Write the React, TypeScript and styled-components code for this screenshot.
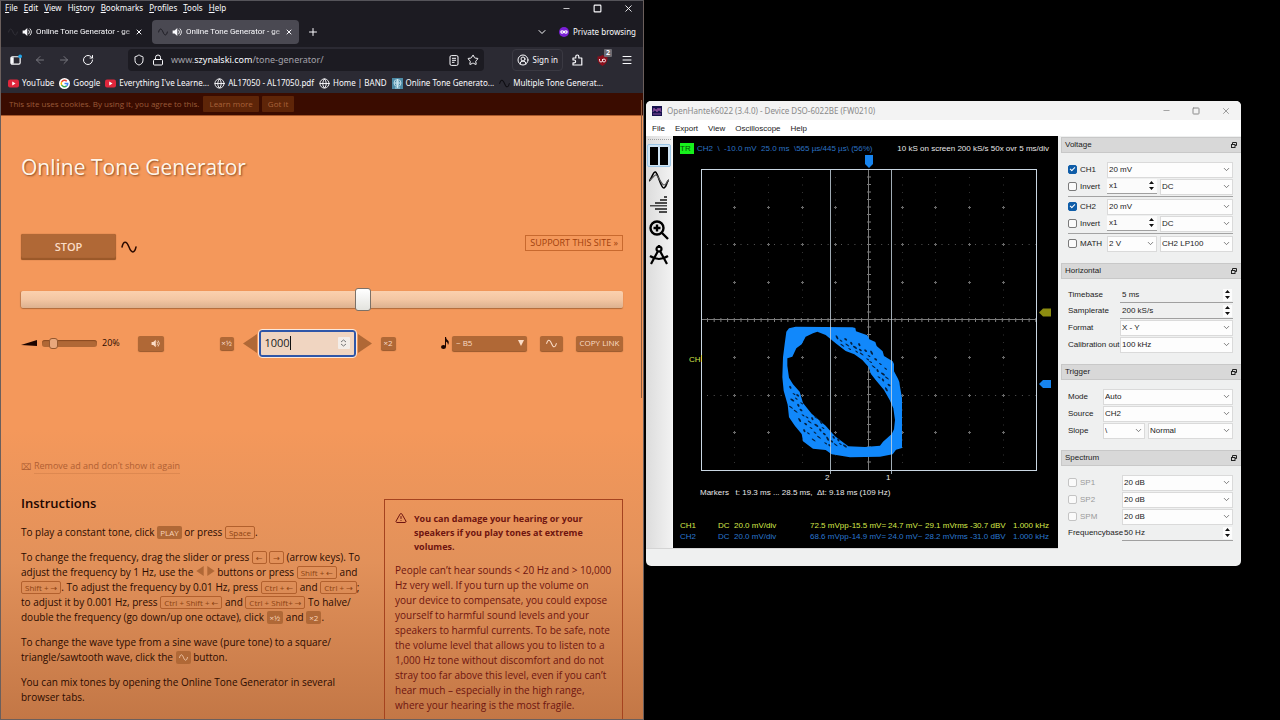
import React from "react";
import styled, { createGlobalStyle, css } from "styled-components";
import {
  ArrowLeft,
  ArrowRight,
  ChevronDown,
  CircleUserRound,
  Globe,
  Lock,
  Menu as MenuIcon,
  Minus,
  Plus,
  RotateCw,
  Shield,
  Square,
  Star,
  TriangleAlert,
  X,
} from "lucide-react";

const Global = createGlobalStyle`
  *, *::before, *::after { box-sizing: border-box; }
  body { margin: 0; background: #000; }
  button, input, select { font: inherit; color: inherit; margin: 0; padding: 0; border: 0; background: none; border-radius: 0; }
  h1, h2, p { margin: 0; font-weight: 400; }
`;

const uiFont = `"Noto Sans", "Open Sans", sans-serif`;
const pageFont = `"Open Sans", "Noto Sans", sans-serif`;
const scopeFont = `"Liberation Sans", Arial, sans-serif`;

/* ---------- desktop ---------- */

const Desktop = styled.main`
  display: grid;
  grid-template-columns: minmax(0, 644fr) minmax(0, 636fr);
  align-items: start;
  height: 100vh;
  overflow: hidden;
  background: #000;
`;

/* ---------- browser window ---------- */

const Browser = styled.section`
  position: relative;
  display: flex;
  flex-direction: column;
  height: 100vh;
  overflow: hidden;
  border: 1px solid #6b5f5c;
  border-top-color: #55545a;
  font: 8px/12px ${uiFont};
  color: #fbfbfe;
  background: #1c1b22;
`;

const MenuRow = styled.header`
  display: flex;
  align-items: center;
  justify-content: space-between;
  height: 14px;
  flex: none;
  padding: 0 9px 0 4px;
`;

const MenuItems = styled.nav<{ $gap: number }>`
  display: flex;
  gap: ${(p) => p.$gap}px;
`;

const MenuItem = styled.button`
  white-space: nowrap;
  u { text-underline-offset: 1px; }
`;

const WindowButtons = styled.div<{ $gap: number }>`
  display: flex;
  align-items: center;
  gap: ${(p) => p.$gap}px;
`;

const IconButton = styled.button<{ $w?: number; $dim?: boolean }>`
  position: relative;
  display: flex;
  align-items: center;
  justify-content: center;
  flex: none;
  width: ${(p) => p.$w ?? 12}px;
  height: 14px;
  ${(p) => p.$dim && css`color: #77767e;`}
`;

const TabRow = styled.div`
  display: flex;
  align-items: center;
  height: 32px;
  flex: none;
  padding: 2px 7px 0 1px;
  gap: 3px;
`;

const Tab = styled.div<{ $active?: boolean }>`
  display: flex;
  align-items: center;
  width: 147px;
  height: 24px;
  padding: 0 6px;
  border-radius: 4px;
  ${(p) => p.$active && css`background: #4a4952;`}
`;

const TabIcons = styled.span`
  display: flex;
  gap: 4px;
  margin-right: 4px;
`;

const TabTitle = styled.span`
  flex: 1;
  min-width: 0;
  overflow: hidden;
  white-space: nowrap;
  font-family: Roboto, ${uiFont};
  mask-image: linear-gradient(90deg, #000 88%, rgba(0, 0, 0, 0.25));
`;

const Spacer = styled.div`
  flex: 1;
`;

const PrivateBadge = styled.div`
  display: flex;
  align-items: center;
  gap: 4px;
  margin-left: 8px;
  white-space: nowrap;
`;

const NavRow = styled.div`
  display: flex;
  align-items: center;
  flex: none;
  height: 26px;
  padding: 0 10px 0 9px;
  gap: 8px;
  background: #2b2a33;
`;

const NavGroup = styled.div<{ $gap: number }>`
  display: flex;
  align-items: center;
  flex: none;
  gap: ${(p) => p.$gap}px;
`;

const UrlField = styled.div`
  display: flex;
  align-items: center;
  flex: 1;
  min-width: 0;
  height: 22px;
  margin: 0 20px 0 26px;
  padding: 0 5px;
  gap: 7px;
  border-radius: 4px;
  background: #1c1b22;
`;

const UrlText = styled.a`
  flex: 1;
  font-size: 9px;
  white-space: nowrap;
  text-decoration: none;
  color: #a3a2aa;
  b { font-weight: 400; color: #fbfbfe; }
`;

const SignIn = styled.button`
  display: flex;
  align-items: center;
  gap: 4px;
  height: 22px;
  padding: 0 4px;
  border: 1px solid #3a3942;
  border-radius: 4px;
  white-space: nowrap;
`;

const Badge = styled.span`
  position: absolute;
  top: -4px;
  right: -4px;
  padding: 0 2px;
  font: 700 7px/8px ${uiFont};
  border-radius: 1px;
  background: #6d6c73;
`;

const BookmarkRow = styled.nav`
  display: flex;
  align-items: center;
  flex: none;
  height: 20px;
  padding: 0 7px;
  gap: 5px;
  background: #2b2a33;
`;

const Bookmark = styled.a`
  display: flex;
  align-items: center;
  gap: 3px;
  white-space: nowrap;
  color: inherit;
  text-decoration: none;
`;

/* ---------- tone generator page ---------- */

const CookieBar = styled.div`
  display: flex;
  align-items: center;
  flex: none;
  gap: 3px;
  height: 23px;
  padding: 0 8px;
  border-bottom: 1px solid #a8592c;
  font: 8px/12px ${pageFont};
  color: #9a5a38;
  background: #3a0c00;
`;

const CookieButton = styled.button`
  height: 16px;
  padding: 0 6px;
  border-radius: 1px;
  color: #a9623a;
  background: #5e2508;
`;

const CookieText = styled.span`
  margin-right: 1px;
`;

const Page = styled.div`
  flex: 1;
  min-height: 0;
  overflow: hidden;
  padding: 35px 20px 0;
  font-family: ${pageFont};
  color: #2b0b00;
  background: linear-gradient(180deg, #f4985b 0%, #f4985b 52%, #e2915a 74%, #c37746 100%);
`;

const ScrollThumb = styled.div`
  position: absolute;
  top: 99px;
  right: 1px;
  width: 1px;
  height: 298px;
  background: #8d5a3c;
`;

const Title = styled.h1`
  font-size: 21px;
  line-height: 32px;
  color: #fff6ea;
  text-shadow: 1px 1px 2px #8a4a20;
`;

const PlayRow = styled.div`
  display: flex;
  justify-content: space-between;
  align-items: flex-start;
  margin-top: 51px;
`;

const PlayGroup = styled.div`
  display: flex;
  align-items: center;
  gap: 5px;
`;

const StopButton = styled.button`
  width: 95px;
  height: 26px;
  border-radius: 2px;
  font-size: 11px;
  font-weight: 600;
  color: #fbdcc6;
  background: #b06836;
  box-shadow: inset 0 -2px 1px #9a5829, 0 0 1px #8a4a20;
`;

const SupportLink = styled.a`
  margin-top: 1px;
  padding: 0 4px;
  border: 1px solid #c8692e;
  font-size: 9px;
  line-height: 14px;
  text-decoration: none;
  color: #a03f0c;
`;

const FrequencySlider = styled.input`
  display: block;
  width: 100%;
  height: 23px;
  margin: 28px 0 0;
  appearance: none;
  &::-webkit-slider-runnable-track {
    height: 17px;
    border-radius: 2px;
    background: linear-gradient(180deg, #fbd0ae, #f3c6a3 50%, #dcb18f);
    box-shadow: 0 1px 1px #b06a3a, -1px 0 1px #c98050;
  }
  &::-webkit-slider-thumb {
    appearance: none;
    width: 16px;
    height: 23px;
    margin-top: -3px;
    border: 1px solid #7b7168;
    border-radius: 3px;
    background: linear-gradient(180deg, #fff, #e3e3de);
  }
`;

const ControlRow = styled.div`
  display: flex;
  align-items: center;
  justify-content: space-between;
  margin-top: 17px;
  height: 30px;
`;

const ControlGroup = styled.div<{ $gap: number; $padRight?: number }>`
  display: flex;
  align-items: center;
  gap: ${(p) => p.$gap}px;
  padding-right: ${(p) => p.$padRight ?? 0}px;
`;

const VolumeLabel = styled.label`
  display: flex;
  align-items: center;
  gap: 5px;
  width: 110px;
  font-size: 9px;
`;

const VolumeSlider = styled.input`
  width: 55px;
  height: 11px;
  appearance: none;
  &::-webkit-slider-runnable-track {
    height: 7px;
    border-radius: 3px;
    background: #b06836;
    box-shadow: inset 0 1px 1px #8a4a20;
  }
  &::-webkit-slider-thumb {
    appearance: none;
    width: 9px;
    height: 11px;
    margin-top: -2px;
    border: 1px solid #94582f;
    border-radius: 3px;
    background: #e8a77c;
  }
`;

const SmallButton = styled.button<{ $w: number; $h?: number; $end?: boolean }>`
  display: flex;
  align-items: center;
  justify-content: ${(p) => (p.$end ? "flex-end" : "center")};
  flex: none;
  width: ${(p) => p.$w}px;
  height: ${(p) => p.$h ?? 15}px;
  padding: 0 ${(p) => (p.$end ? 4 : 0)}px;
  border-radius: 2px;
  font-size: 8px;
  white-space: nowrap;
  color: #fbdcc6;
  background: #b06836;
  box-shadow: 0 1px 1px #96572c;
`;

const FrequencyField = styled.label`
  display: flex;
  align-items: center;
  width: 97px;
  height: 27px;
  padding: 0 4px;
  border: 2px solid #2f56a8;
  border-radius: 3px;
  outline: 1px solid #fbe9dc;
  background: #f0d5c1;
  input {
    width: 25px;
    font-size: 11px;
    line-height: 20px;
    color: #222;
    outline: 0;
  }
`;

const Caret = styled.span`
  width: 1px;
  height: 14px;
  margin-right: auto;
  background: #111;
`;

const Stepper = styled.button`
  display: flex;
  align-items: center;
  justify-content: center;
  width: 12px;
  height: 12px;
  border-radius: 1px;
  background: #f3ede8;
`;

const NoteSelect = styled.span`
  display: grid;
  align-items: center;
  width: 75px;
  height: 15px;
  border-radius: 2px;
  font-size: 8px;
  color: #fbdcc6;
  background: #b06836;
  box-shadow: 0 1px 1px #96572c;
  select, svg { grid-area: 1 / 1; }
  select { appearance: none; width: 100%; padding-left: 4px; }
  svg { justify-self: end; margin-right: 3px; pointer-events: none; }
`;

const RemoveAd = styled.button`
  display: flex;
  align-items: center;
  gap: 3px;
  margin-top: 101px;
  font-size: 9px;
  line-height: 14px;
  color: #b05f33;
  span { border-bottom: 1px solid #dd8850; }
`;

const Columns = styled.div`
  display: grid;
  grid-template-columns: minmax(0, 1fr) 239px;
  gap: 22px;
  margin-top: 25px;
`;

const Instructions = styled.article`
  font-size: 10px;
  line-height: 15px;
  white-space: nowrap;
  h2 {
    margin: -6px 0 12px;
    font-size: 13px;
    font-weight: 600;
    line-height: 20px;
    color: #1c0500;
  }
  p { margin-bottom: 10px; }
`;

const Key = styled.kbd`
  padding: 0 3px;
  border: 1px solid #b2602d;
  border-radius: 2px;
  font: 8px/12px "Open Sans", "DejaVu Sans", sans-serif;
  color: #8c4312;
`;

const Chip = styled.span`
  padding: 1px 3px;
  border-radius: 2px;
  font-size: 8px;
  line-height: 12px;
  color: #f8d3b8;
  background: #b06836;
  svg { vertical-align: -1px; }
`;

const Warning = styled.aside`
  height: 300px;
  padding: 12px 8px 12px 10px;
  border: 1px solid #a5431f;
  font-size: 10px;
  line-height: 15px;
  white-space: nowrap;
  color: #6e1410;
`;

const WarningHead = styled.div`
  display: flex;
  gap: 7px;
  margin-bottom: 9px;
  font-size: 9px;
  font-weight: 700;
  line-height: 14px;
`;

/* ---------- oscilloscope window ---------- */

const ScopeArea = styled.section`
  padding: 101px 39px 0 2px;
`;

const ScopeWindow = styled.div`
  overflow: hidden;
  border-radius: 5px;
  font: 8px/12px ${scopeFont};
  color: #222;
  background: #eff0f0;
`;

const ScopeTitle = styled.header`
  display: flex;
  align-items: center;
  gap: 5px;
  height: 19px;
  padding: 0 9px 0 6px;
  font: 8px/12px ${uiFont};
  color: #8a8a8a;
  background: #f3f3f3;
`;

const ScopeMenu = styled.nav`
  display: flex;
  align-items: center;
  height: 16px;
  padding: 2px 6px 0;
  gap: 10px;
  background: #fff;
`;

const ScopeBody = styled.div`
  display: flex;
`;

const ScopeMain = styled.div`
  flex: 1;
  min-width: 0;
`;

const ScopeWork = styled.div`
  display: flex;
  border-bottom: 1px solid #d4d4d4;
`;

const ToolColumn = styled.div`
  display: flex;
  flex-direction: column;
  align-items: center;
  flex: none;
  width: 27px;
  padding-top: 3px;
  background: linear-gradient(90deg, #dcdcdc, #f2f2f2);
  border-right: 1px solid #f7f7f7;
`;

const ToolGrip = styled.div`
  width: 23px;
  border-top: 1px dotted #a0a0a0;
  margin-bottom: 4px;
`;

const ToolButton = styled.button<{ $on?: boolean }>`
  display: flex;
  align-items: center;
  justify-content: center;
  width: 24px;
  height: ${(p) => (p.$on ? 23 : 25)}px;
  border: 1px solid ${(p) => (p.$on ? "#9cc6e6" : "transparent")};
  border-radius: 2px;
  color: #000;
  background: ${(p) => (p.$on ? "#cfe4f4" : "transparent")};
`;

const Screen = styled.div`
  flex: 1;
  min-width: 0;
  color: #e8e8e8;
  background: #000;
  padding-bottom: 6px;
`;

const ScreenHeader = styled.div`
  display: flex;
  align-items: flex-end;
  height: 18px;
  padding: 0 9px 0 7px;
  line-height: 11px;
  white-space: nowrap;
`;

const TriggerFlag = styled.span`
  width: 14px;
  margin-right: 3px;
  color: #084d08;
  background: #17f01c;
`;

const TriggerInfo = styled.span`
  flex: 1;
  white-space: pre;
  color: #2c73c4;
`;

const Plot = styled.svg`
  display: block;
  width: 100%;
  height: auto;
`;

const MarkerText = styled.div`
  padding: 4px 27px 0;
  height: 18px;
  line-height: 12px;
  white-space: pre;
`;

const Measures = styled.table`
  width: 369px;
  margin: 19px 0 0 7px;
  border-collapse: collapse;
  table-layout: fixed;
  td { padding: 0; line-height: 11px; white-space: nowrap; }
`;

const MeasureRow = styled.tr<{ $color: string }>`
  color: ${(p) => p.$color};
`;

const StatusBar = styled.div`
  height: 17px;
`;

const Docks = styled.aside`
  flex: none;
  width: 183px;
  padding: 1px 0 14px;
`;

const DockTitle = styled.header`
  display: flex;
  align-items: center;
  justify-content: space-between;
  height: 16px;
  margin-left: 3px;
  padding: 0 4px 0 3px;
  border: 1px solid #c8c8c8;
  border-width: 1px 0 1px 1px;
  background: #d8d8d8;
`;

const DockBody = styled.div`
  padding: 8px 8px 11px 10px;
`;

const FormRow = styled.div<{ $label: number; $spin?: boolean }>`
  display: grid;
  grid-template-columns: ${(p) => p.$label}px minmax(0, 1fr);
  align-items: center;
  height: ${(p) => (p.$spin ? 16 : 17)}px;
  white-space: nowrap;
`;

const Pair = styled.div<{ $first: number }>`
  display: grid;
  grid-template-columns: ${(p) => p.$first}px minmax(0, 1fr);
  gap: 3px;
`;

const Rule = styled.hr`
  margin: 1px 0;
  border: 0;
  border-top: 1px solid #a3a3a3;
`;

const ComboBox = styled.span`
  display: grid;
  align-items: center;
  height: 16px;
  border: 1px solid #dadada;
  background: #fdfdfd;
  select, svg { grid-area: 1 / 1; }
  select { appearance: none; width: 100%; padding-left: 1px; }
  svg { justify-self: end; margin-right: 1px; color: #555; pointer-events: none; }
`;

const SpinBox = styled.span<{ $white?: boolean }>`
  display: flex;
  align-items: center;
  height: 15px;
  border-bottom: 1px solid #a0a0a0;
  background: ${(p) => (p.$white ? "#fbfbfb" : "transparent")};
  input { flex: 1; min-width: 0; width: 100%; padding-left: 2px; }
  button { display: flex; width: 9px; height: 12px; margin-right: 1px; align-items: center; justify-content: center; background: #fcfcfc; }
`;

const CheckLabel = styled.label<{ $disabled?: boolean }>`
  display: flex;
  align-items: center;
  gap: 3px;
  color: ${(p) => (p.$disabled ? "#9a9a9a" : "#222")};
  input {
    appearance: none;
    display: grid;
    place-items: center;
    width: 9px;
    height: 9px;
    border: 1px solid ${(p) => (p.$disabled ? "#c4c4c4" : "#7a7a7a")};
    border-radius: 2px;
    background: #fafafa;
  }
  input:checked { border-color: #0f5da8; background: #0f5da8; }
  input:checked::before {
    content: "";
    width: 5px;
    height: 3px;
    margin-bottom: 2px;
    border: solid #fff;
    border-width: 0 0 1px 1px;
    transform: rotate(-45deg);
  }
`;

/* ---------- small drawings ---------- */

const Wave = ({ size = 15, color = "currentColor", width = 1.5 }: { size?: number; color?: string; width?: number }) => (
  <svg width={size} height={size} viewBox="0 0 16 16" fill="none" stroke={color} strokeWidth={width} strokeLinecap="round">
    <path d="M1 8C2.5 1.5 5.5 1.5 8 8s5.500 6.500 7 0" />
  </svg>
);

const Speaker = ({ size = 10 }: { size?: number }) => (
  <svg width={size} height={size} viewBox="0 0 16 16" fill="currentColor">
    <path d="M1 5.500h3L8.500 1.500v13L4 10.500H1z" />
    <path d="M10.500 4.500q3 3.500 0 7M12.500 2.500q5 5.500 0 11" fill="none" stroke="currentColor" strokeWidth="1.400" />
  </svg>
);

const YouTube = () => (
  <svg width="11" height="9" viewBox="0 0 22 18">
    <rect y="1" width="22" height="16" rx="4" fill="#e0263c" />
    <path d="M8.500 5v8l6.500-4z" fill="#fff" />
  </svg>
);

const GoogleMark = () => (
  <svg width="11" height="11" viewBox="0 0 22 22">
    <circle cx="11" cy="11" r="11" fill="#fff" />
    <g fill="none" strokeWidth="3">
      <path d="M15.500 6.500A6.500 6.500 0 0 0 5.200 8" stroke="#ea4335" />
      <path d="M5.200 8a6.500 6.500 0 0 0 0 6" stroke="#fbbc05" />
      <path d="M5.200 14a6.500 6.500 0 0 0 10 1.800" stroke="#34a853" />
      <path d="M15.200 15.800A6.500 6.500 0 0 0 17.500 11H11" stroke="#4285f4" />
    </g>
  </svg>
);

const TealGlobe = () => (
  <svg width="11" height="11" viewBox="0 0 22 22" fill="none" stroke="#d9f0f8" strokeWidth="1.500">
    <rect width="22" height="22" fill="#4c8aa5" stroke="none" />
    <circle cx="11" cy="10" r="7" />
    <path d="M4 10h14M11 3v17M6 20h10M11 3q-6 7 0 14M11 3q6 7 0 14" />
  </svg>
);

const Mask = () => (
  <svg width="10" height="10" viewBox="0 0 20 20">
    <circle cx="10" cy="10" r="10" fill="#7a1fd6" />
    <path d="M2.500 9.500q0-3 3.500-3 2.500 0 4 1.500 1.500-1.500 4-1.500 3.500 0 3.500 3 0 4-3.500 4-2.500 0-4-2-1.500 2-4 2-3.500 0-3.500-4z" fill="#fff" />
    <circle cx="6.500" cy="10" r="1.400" fill="#7a1fd6" />
    <circle cx="13.500" cy="10" r="1.400" fill="#7a1fd6" />
  </svg>
);

const SidebarIcon = () => (
  <svg width="13" height="12" viewBox="0 0 13 12">
    <rect x="1" y="2.500" width="10" height="8" rx="1.500" fill="none" stroke="#fbfbfe" strokeWidth="1.300" />
    <path d="M1 3h3v7H1z" fill="#fbfbfe" />
    <circle cx="11" cy="2" r="2" fill="#21a5e8" />
  </svg>
);

const ReaderIcon = () => (
  <svg width="10" height="11" viewBox="0 0 10 11" fill="none" stroke="currentColor">
    <rect x="1" y=".6" width="8" height="9.800" rx="1.400" />
    <path d="M3 3.300h4M3 5.300h4M3 7.300h2.500" />
  </svg>
);

const PuzzleIcon = () => (
  <svg width="11" height="12" viewBox="0 0 11 12" fill="none" stroke="currentColor" strokeWidth="1.200" strokeLinejoin="round">
    <path d="M1 4h2.800V2.500a1.500 1.500 0 0 1 3 0V4H9.800v7H1V8.800h1.200a1.400 1.400 0 0 0 0-2.800H1z" />
  </svg>
);

const BlockerIcon = () => (
  <svg width="11" height="11" viewBox="0 0 22 22">
    <path d="M11 0q5 3 10 3 1 14-10 19Q0 17 1 3q5 0 10-3z" fill="#8c0f1c" />
    <path d="M5 8v3q0 3 3 3t3-3V8m0 3q0 3 3 3t3-3-3-3-3 3" fill="none" stroke="#fff" strokeWidth="1.700" />
  </svg>
);

const Triangle = ({ dir, w = 14, h = 19 }: { dir: "left" | "right"; w?: number; h?: number }) => (
  <svg width={w} height={h} viewBox="0 0 14 19">
    <path d={dir === "left" ? "M14 0v19L0 9.500z" : "M0 0v19l14-9.500z"} fill="#b06836" />
  </svg>
);

const SpinArrows = () => (
  <svg width="5" height="9" viewBox="0 0 5 9" fill="#111">
    <path d="M0 3h5L2.500 0zM0 6h5L2.500 9z" />
  </svg>
);

const FloatIcon = () => (
  <svg width="6" height="6" viewBox="0 0 6 6" fill="none" stroke="#222">
    <path d="M1.500 2V.5h4v3H4" />
    <rect x=".5" y="2.500" width="3.500" height="3" />
  </svg>
);

/* ---------- reusable controls ---------- */

const Combo = ({ label, value }: { label: string; value: string }) => (
  <ComboBox>
    <select aria-label={label} defaultValue={value}>
      <option>{value}</option>
    </select>
    <ChevronDown size={9} strokeWidth={2} />
  </ComboBox>
);

const Spin = ({ label, value, white }: { label: string; value: string; white?: boolean }) => (
  <SpinBox $white={white}>
    <input type="text" aria-label={label} defaultValue={value} />
    <button aria-label={`Step ${label}`}>
      <SpinArrows />
    </button>
  </SpinBox>
);

const Check = ({ text, on, disabled }: { text: string; on?: boolean; disabled?: boolean }) => (
  <CheckLabel $disabled={disabled}>
    <input type="checkbox" defaultChecked={on} disabled={disabled} />
    {text}
  </CheckLabel>
);

const Dock = ({ title, children }: { title: string; children: React.ReactNode }) => (
  <section>
    <DockTitle>
      {title}
      <FloatIcon />
    </DockTitle>
    <DockBody>{children}</DockBody>
  </section>
);

/* ---------- scope plot ---------- */

const columns = [61, 95, 129, 162, 229, 262, 296, 330];
const rows = [54, 91, 129, 204, 242, 279];
const ticks = (from: number, count: number, step: number) => Array.from({ length: count }, (_, i) => from + i * step);

const gaps: [number, number][] = [
  [474, 112], [486, 122], [500, 118], [505, 135], [517, 130], [512, 147], [528, 142], [533, 155], [541, 134], [548, 162],
  [560, 152], [570, 168], [578, 158], [575, 186], [590, 178], [584, 200], [596, 212], [604, 192], [612, 222], [620, 206],
  [612, 240], [624, 234], [630, 255], [600, 232], [622, 268], [566, 178], [544, 150], [490, 136],
  [334, 262], [345, 282], [340, 300], [352, 296], [358, 316], [350, 334], [366, 330], [372, 346], [362, 360], [384, 352],
  [380, 372], [392, 366], [400, 356], [396, 384], [412, 376], [408, 398], [424, 390], [420, 412], [436, 402], [432, 384],
  [446, 416], [440, 430], [458, 424], [470, 434], [464, 412], [484, 432], [498, 438], [388, 400], [376, 392], [404, 420],
  [356, 286], [368, 310], [426, 366], [410, 352], [452, 436], [336, 322], [478, 420],
];

const ScopePlot = () => (
  <Plot viewBox="0 1 385 329" role="img" aria-label="X-Y trace of CH1 against CH2">
    <g fill="#565656">
      {columns.flatMap((x) => ticks(24, 39, 7.500).map((y) => <rect key={`${x}-${y}`} x={x} y={y} width="1" height="1" opacity=".6" />))}
      {[91, 242].flatMap((y) => ticks(34, 50, 6.700).map((x) => <rect key={`${x}-${y}`} x={x} y={y} width="1" height="1" />))}
    </g>
    <g stroke="#6a6a6a">
      {columns.flatMap((x) => rows.map((y) => <path key={`${x}-${y}`} d={`M${x - 1} ${y + 0.5}h3M${x + 0.5} ${y - 1}v3`} />))}
    </g>
    <g stroke="#7c7c7c">
      <path d="M195.500 16v301M28 166.500h336" />
      {ticks(24, 39, 7.500).map((y) => <path key={y} d={`M194 ${y}h4`} />)}
      {ticks(34.500, 50, 6.700).map((x) => <path key={x} d={`M${x} 165v4`} />)}
    </g>
    <g transform="translate(6 147) scale(.33333)">
      <path
        fill="#1188fb"
        fillRule="evenodd"
        d="M322 95l8-10 20-5 170 2 9 2 2 10 34 12 6 12 18 8 4 12 18 16 4 14 26 16 4 8v22l12 22 4 10 2 14 6 34v150l-18 5-10 14-38 7-90 2-55-9-18-13-38-4-30-22-4-22-20-24-18-26-4-38-12-42-4-40 2-60 5-40zM325 175l15-5 12-25 16-12 12-23 22-10 13-5 25 10 30 25 30 23 26 10 24 17 18 20 8 22 14 18 25 30 17 30 11 25 5 35-3 28-7 14-26 23-9 12-45 4-50-2-40-30-28-32-42-36-26-32-10-34-20-22-12-20-5-36z"
      />
      <g fill="#04203f">
        {gaps.map(([x, y], i) => (
          <ellipse key={i} cx={x} cy={y} rx={i % 3 === 0 ? 7 : 5} ry={i % 2 ? 1.800 : 2.800} transform={`rotate(${i % 4 === 0 ? 60 : 35} ${x} ${y})`} />
        ))}
      </g>
    </g>
    <g stroke="#c9d6e2">
      <path d="M157.500 16v305M218.500 16v305" opacity=".8" />
      <rect x="28.500" y="16.500" width="335" height="301" fill="none" />
    </g>
    <path d="M192 2h8v9l-4 4-4-4z" fill="#1784ee" />
    <path d="M366 159.500l4-4h8v8h-8z" fill="#8c8c10" />
    <path d="M366 231l4-4h8v8h-8z" fill="#1784ee" />
    <path d="M28.500 202v7" stroke="#d8d84a" />
    <g fontFamily={scopeFont} fontSize="8">
      <text x="16" y="209" fill="#d3e04a">CH</text>
      <text x="152" y="327" fill="#e8e8e8">2</text>
      <text x="213" y="327" fill="#e8e8e8">1</text>
    </g>
  </Plot>
);

const measureWidths = [38, 16, 76, 39, 39, 37, 45, 43, 36];
const measures = [
  { color: "#d6e84a", cells: ["CH1", "DC", "20.0 mV/div", "72.5 mVpp", "-15.5 mV=", "24.7 mV~", "29.1 mVrms", "-30.7 dBV", "1.000 kHz"] },
  { color: "#2b78d0", cells: ["CH2", "DC", "20.0 mV/div", "68.6 mVpp", "-14.9 mV=", "24.0 mV~", "28.2 mVrms", "-31.0 dBV", "1.000 kHz"] },
];

/* ---------- windows ---------- */

const BrowserTab = ({ active }: { active?: boolean }) => (
  <Tab $active={active}>
    <TabIcons>
      <Wave size={10} color={active ? "#1c1b22" : "#33323a"} />
      <Speaker />
    </TabIcons>
    <TabTitle>Online Tone Generator - ge</TabTitle>
    <IconButton aria-label="Close tab" $w={9}><X size={8} strokeWidth={3} /></IconButton>
  </Tab>
);

const BrowserWindow = () => (
  <Browser>
    <MenuRow>
      <MenuItems $gap={6}>
        {["File", "Edit", "View", "History", "Bookmarks", "Profiles", "Tools", "Help"].map((m) => (
          <MenuItem key={m}>
            {m === "History" ? <>Hi<u>s</u>tory</> : <><u>{m[0]}</u>{m.slice(1)}</>}
          </MenuItem>
        ))}
      </MenuItems>
      <WindowButtons $gap={19}>
        <IconButton aria-label="Minimize"><Minus size={9} /></IconButton>
        <IconButton aria-label="Maximize"><Square size={9} strokeWidth={3} /></IconButton>
        <IconButton aria-label="Close"><X size={11} /></IconButton>
      </WindowButtons>
    </MenuRow>

    <TabRow>
      <BrowserTab />
      <BrowserTab active />
      <IconButton aria-label="New tab" $w={22}><Plus size={12} /></IconButton>
      <Spacer />
      <IconButton aria-label="List all tabs"><ChevronDown size={12} /></IconButton>
      <PrivateBadge><Mask />Private browsing</PrivateBadge>
    </TabRow>

    <NavRow>
      <NavGroup $gap={12}>
        <IconButton aria-label="Sidebar"><SidebarIcon /></IconButton>
        <IconButton aria-label="Back" $dim><ArrowLeft size={12} /></IconButton>
        <IconButton aria-label="Forward" $dim><ArrowRight size={12} /></IconButton>
        <IconButton aria-label="Reload"><RotateCw size={12} /></IconButton>
      </NavGroup>
      <UrlField>
        <IconButton aria-label="Tracking protection"><Shield size={12} /></IconButton>
        <IconButton aria-label="Site information"><Lock size={12} /></IconButton>
        <UrlText href="#">www.<b>szynalski.com</b>/tone-generator/</UrlText>
        <IconButton aria-label="Reader view"><ReaderIcon /></IconButton>
        <IconButton aria-label="Bookmark this page"><Star size={12} /></IconButton>
      </UrlField>
      <SignIn><CircleUserRound size={12} />Sign in</SignIn>
      <NavGroup $gap={13}>
        <IconButton aria-label="Extensions"><PuzzleIcon /></IconButton>
        <IconButton aria-label="Content blocker"><BlockerIcon /><Badge>2</Badge></IconButton>
        <IconButton aria-label="Application menu"><MenuIcon size={12} /></IconButton>
      </NavGroup>
    </NavRow>

    <BookmarkRow>
      <Bookmark href="#"><YouTube />YouTube</Bookmark>
      <Bookmark href="#"><GoogleMark />Google</Bookmark>
      <Bookmark href="#"><YouTube />Everything I've Learne...</Bookmark>
      <Bookmark href="#"><Globe size={11} />AL17050 - AL17050.pdf</Bookmark>
      <Bookmark href="#"><Globe size={11} />Home | BAND</Bookmark>
      <Bookmark href="#"><TealGlobe />Online Tone Generato...</Bookmark>
      <Bookmark href="#"><Wave size={11} color="#0e0d12" />Multiple Tone Generat...</Bookmark>
    </BookmarkRow>

    <CookieBar>
      <CookieText>This site uses cookies. By using it, you agree to this.</CookieText>
      <CookieButton>Learn more</CookieButton>
      <CookieButton>Got it</CookieButton>
    </CookieBar>

    <Page>
      <Title>Online Tone Generator</Title>
      <PlayRow>
        <PlayGroup>
          <StopButton>STOP</StopButton>
          <Wave size={16} />
        </PlayGroup>
        <SupportLink href="#">SUPPORT THIS SITE »</SupportLink>
      </PlayRow>
      <FrequencySlider type="range" aria-label="Frequency" min={0} max={1000} defaultValue={570} />
      <ControlRow>
        <ControlGroup $gap={7} $padRight={10}>
          <VolumeLabel>
            <svg width="16" height="6" viewBox="0 0 16 6"><path d="M0 5L16 0v6z" fill="#1c0500" /></svg>
            <VolumeSlider type="range" aria-label="Volume" min={0} max={100} defaultValue={16} />
            20%
          </VolumeLabel>
          <SmallButton $w={26} $end aria-label="Balance"><Speaker size={9} /></SmallButton>
        </ControlGroup>
        <ControlGroup $gap={9}>
          <SmallButton $w={14} $h={13}>×½</SmallButton>
          <ControlGroup $gap={2}>
            <Triangle dir="left" />
            <FrequencyField>
              <input type="text" aria-label="Frequency in hertz" defaultValue="1000" />
              <Caret />
              <Stepper aria-label="Step frequency">
                <svg width="7" height="8" viewBox="0 0 7 8" fill="none" stroke="#777"><path d="M1 3l2.500-2L6 3M1 5l2.500 2L6 5" /></svg>
              </Stepper>
            </FrequencyField>
            <Triangle dir="right" />
          </ControlGroup>
          <SmallButton $w={15} $h={13}>×2</SmallButton>
        </ControlGroup>
        <ControlGroup $gap={13}>
          <ControlGroup $gap={3}>
            <svg width="8" height="12" viewBox="0 0 8 12" fill="#1c0500">
              <ellipse cx="2.500" cy="10" rx="2.500" ry="1.900" />
              <path d="M4 0h1q0 2 2 3.500Q8.500 5 7 8 7 5 5 4.500V10H4z" />
            </svg>
            <NoteSelect>
              <select aria-label="Note" defaultValue="~ B5"><option>~ B5</option></select>
              <svg width="6" height="6" viewBox="0 0 6 6" fill="currentColor"><path d="M0 0h6L3 6z" /></svg>
            </NoteSelect>
          </ControlGroup>
          <SmallButton $w={23} aria-label="Wave type"><Wave size={11} /></SmallButton>
          <SmallButton $w={47}>COPY LINK</SmallButton>
        </ControlGroup>
      </ControlRow>

      <RemoveAd>⌧ <span>Remove ad and don’t show it again</span></RemoveAd>

      <Columns>
        <Instructions>
          <h2>Instructions</h2>
          <p>To play a constant tone, click <Chip>PLAY</Chip> or press <Key>Space</Key>.</p>
          <p>
            To change the frequency, drag the slider or press <Key>←</Key> <Key>→</Key> (arrow keys). To<br />
            adjust the frequency by 1 Hz, use the <Triangle dir="left" w={8} h={10} /> <Triangle dir="right" w={8} h={10} /> buttons or press <Key>Shift + ←</Key> and<br />
            <Key>Shift + →</Key>. To adjust the frequency by 0.01 Hz, press <Key>Ctrl + ←</Key> and <Key>Ctrl + →</Key>;<br />
            to adjust it by 0.001 Hz, press <Key>Ctrl + Shift + ←</Key> and <Key>Ctrl + Shift+ →</Key> To halve/<br />
            double the frequency (go down/up one octave), click <Chip>×½</Chip> and <Chip>×2</Chip>.
          </p>
          <p>
            To change the wave type from a sine wave (pure tone) to a square/<br />
            triangle/sawtooth wave, click the <Chip><Wave size={9} /></Chip> button.
          </p>
          <p>
            You can mix tones by opening the Online Tone Generator in several<br />
            browser tabs.
          </p>
        </Instructions>
        <Warning>
          <WarningHead>
            <TriangleAlert size={12} />
            <span>You can damage your hearing or your<br />speakers if you play tones at extreme<br />volumes.</span>
          </WarningHead>
          <p>
            People can’t hear sounds &lt; 20 Hz and &gt; 10,000<br />
            Hz very well. If you turn up the volume on<br />
            your device to compensate, you could expose<br />
            yourself to harmful sound levels and your<br />
            speakers to harmful currents. To be safe, note<br />
            the volume level that allows you to listen to a<br />
            1,000 Hz tone without discomfort and do not<br />
            stray too far above this level, even if you can’t<br />
            hear much – especially in the high range,<br />
            where your hearing is the most fragile.
          </p>
        </Warning>
      </Columns>
    </Page>
    <ScrollThumb />
  </Browser>
);

const OscilloscopeWindow = () => (
  <ScopeArea>
    <ScopeWindow>
      <ScopeTitle>
        <svg width="10" height="10" viewBox="0 0 10 10">
          <rect width="10" height="10" fill="#17124e" />
          <path d="M1 6l1-4 1 3 1-2 1 3 1-4 1 3 1-3 1 4M1 8h8" fill="none" stroke="#8a4f9c" />
        </svg>
        OpenHantek6022 (3.4.0) - Device DSO-6022BE (FW0210)
        <Spacer />
        <WindowButtons $gap={18}>
          <IconButton aria-label="Minimize"><Minus size={9} /></IconButton>
          <IconButton aria-label="Maximize"><Square size={8} strokeWidth={3} /></IconButton>
          <IconButton aria-label="Close"><X size={10} /></IconButton>
        </WindowButtons>
      </ScopeTitle>
      <ScopeMenu>
        {["File", "Export", "View", "Oscilloscope", "Help"].map((m) => <MenuItem key={m}>{m}</MenuItem>)}
      </ScopeMenu>
      <ScopeBody>
        <ScopeMain>
          <ScopeWork>
            <ToolColumn>
              <ToolGrip />
              <ToolButton $on aria-label="Pause">
                <svg width="18" height="18" viewBox="0 0 18 18"><path d="M0 0h8v18H0zM10 0h8v18h-8z" /></svg>
              </ToolButton>
              <ToolButton aria-label="Voltage trace">
                <svg width="20" height="20" viewBox="0 0 20 20" fill="none">
                  <path d="M0 11C3 9 4 1 6.500 2S12 19 15 18s2-6 5-8" stroke="#000" strokeWidth="1.600" />
                  <path d="M0 10c3 0 4-4 6.500-5S12 15 15 15s2-4 5-5" stroke="#555" strokeWidth="1.200" />
                </svg>
              </ToolButton>
              <ToolButton aria-label="Spectrum">
                <svg width="20" height="18" viewBox="0 0 20 18" fill="#4a4a4a">
                  <path d="M15 0h3v2h-3zM11 3h7v2h-7zM6 6h12v2H6zM1 9h17v1.500H1zM6 12h12v2H6zM10 15h8v2h-8z" />
                </svg>
              </ToolButton>
              <ToolButton aria-label="Zoom">
                <svg width="20" height="20" viewBox="0 0 20 20" fill="none" stroke="#000" strokeWidth="2.400">
                  <circle cx="8" cy="8" r="6.500" />
                  <path d="M13 13l6 6M8 4.500v7M4.500 8h7" />
                </svg>
              </ToolButton>
              <ToolButton aria-label="Measure">
                <svg width="20" height="20" viewBox="0 0 20 20" fill="none" stroke="#000" strokeWidth="2.200">
                  <circle cx="10" cy="4" r="2.500" />
                  <path d="M9 6L2 19M11 6l7 13M1 11q9 6 18 0M10 0v3" />
                </svg>
              </ToolButton>
            </ToolColumn>
            <Screen>
              <ScreenHeader>
                <TriggerFlag>TR</TriggerFlag>
                <TriggerInfo>{"CH2  \\  -10.0 mV  25.0 ms  \\565 µs/445 µs\\ (56%)"}</TriggerInfo>
                <span>10 kS on screen 200 kS/s 50x ovr 5 ms/div</span>
              </ScreenHeader>
              <ScopePlot />
              <MarkerText>{"Markers   t: 19.3 ms ... 28.5 ms,  Δt: 9.18 ms (109 Hz)"}</MarkerText>
              <Measures>
                <colgroup>
                  {measureWidths.map((w, i) => <col key={i} style={{ width: w }} />)}
                </colgroup>
                <tbody>
                  {measures.map((m) => (
                    <MeasureRow key={m.cells[0]} $color={m.color}>
                      {m.cells.map((c) => <td key={c}>{c}</td>)}
                    </MeasureRow>
                  ))}
                </tbody>
              </Measures>
            </Screen>
          </ScopeWork>
          <StatusBar />
        </ScopeMain>
        <Docks>
          <Dock title="Voltage">
            <FormRow $label={39}><Check text="CH1" on /><Combo label="CH1 gain" value="20 mV" /></FormRow>
            <FormRow $label={39}>
              <Check text="Invert" />
              <Pair $first={50}><Spin label="CH1 probe" value="x1" white /><Combo label="CH1 coupling" value="DC" /></Pair>
            </FormRow>
            <Rule />
            <FormRow $label={39}><Check text="CH2" on /><Combo label="CH2 gain" value="20 mV" /></FormRow>
            <FormRow $label={39}>
              <Check text="Invert" />
              <Pair $first={50}><Spin label="CH2 probe" value="x1" white /><Combo label="CH2 coupling" value="DC" /></Pair>
            </FormRow>
            <Rule />
            <FormRow $label={39}>
              <Check text="MATH" />
              <Pair $first={50}><Combo label="Math gain" value="2 V" /><Combo label="Math mode" value="CH2 LP100" /></Pair>
            </FormRow>
          </Dock>
          <Dock title="Horizontal">
            <FormRow $label={52} $spin><span>Timebase</span><Spin label="Timebase" value="5 ms" /></FormRow>
            <FormRow $label={52} $spin><span>Samplerate</span><Spin label="Samplerate" value="200 kS/s" /></FormRow>
            <FormRow $label={52}><span>Format</span><Combo label="Format" value="X - Y" /></FormRow>
            <FormRow $label={52}><span>Calibration out</span><Combo label="Calibration out" value="100 kHz" /></FormRow>
          </Dock>
          <Dock title="Trigger">
            <FormRow $label={35}><span>Mode</span><Combo label="Mode" value="Auto" /></FormRow>
            <FormRow $label={35}><span>Source</span><Combo label="Source" value="CH2" /></FormRow>
            <FormRow $label={35}>
              <span>Slope</span>
              <Pair $first={42}><Combo label="Slope" value="\" /><Combo label="Trigger filter" value="Normal" /></Pair>
            </FormRow>
          </Dock>
          <Dock title="Spectrum">
            <FormRow $label={54}><Check text="SP1" disabled /><Combo label="SP1 magnitude" value="20 dB" /></FormRow>
            <FormRow $label={54}><Check text="SP2" disabled /><Combo label="SP2 magnitude" value="20 dB" /></FormRow>
            <FormRow $label={54}><Check text="SPM" disabled /><Combo label="SPM magnitude" value="20 dB" /></FormRow>
            <FormRow $label={54} $spin><span>Frequencybase</span><Spin label="Frequencybase" value="50 Hz" /></FormRow>
          </Dock>
        </Docks>
      </ScopeBody>
    </ScopeWindow>
  </ScopeArea>
);

export default function App() {
  return (
    <Desktop>
      <Global />
      <BrowserWindow />
      <OscilloscopeWindow />
    </Desktop>
  );
}
